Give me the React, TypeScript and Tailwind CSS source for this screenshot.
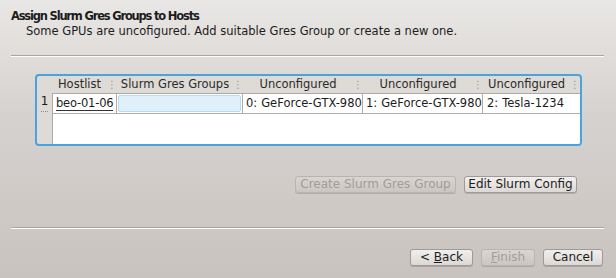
import React from 'react';

const font = { fontFamily: '"DejaVu Sans", Verdana, sans-serif' };

function Sep() {
  return (
    <div className="mx-[11px] w-[593px]">
      <div className="h-px bg-[#aaa5a1]" />
      <div className="h-px bg-white" />
    </div>
  );
}

function Btn({ children, disabled, w }: { children: React.ReactNode; disabled?: boolean; w: string }) {
  return (
    <button
      className={`${w} h-[17px] rounded-[3px] border text-[12px] leading-[15px] whitespace-nowrap shadow-[0_1px_0_rgba(0,0,0,0.15)] ${
        disabled
          ? 'border-[#b9b4b0] bg-gradient-to-b from-[#d9d5d2] to-[#cbc6c2] text-[#a29d99]'
          : 'border-[#9f9a96] bg-gradient-to-b from-[#f1efee] to-[#dcd8d5] text-[#1c1c1c]'
      }`}
    >
      {children}
    </button>
  );
}

const cols = [
  { name: 'Hostlist', w: 'w-[65px]' },
  { name: 'Slurm Gres Groups', w: 'w-[126px]' },
  { name: 'Unconfigured', w: 'w-[120px]' },
  { name: 'Unconfigured', w: 'w-[120px]' },
  { name: 'Unconfigured', w: 'w-[97px]' },
];

function Grip() {
  return <span className="text-[#9a9591] text-[10px] leading-none">⋮</span>;
}

export default function App() {
  return (
    <div
      style={font}
      className="w-[616px] h-[278px] overflow-hidden bg-gradient-to-b from-[#e9e7e5] via-[#d6d2cf] via-40% to-[#c8c3bf] text-[#1c1c1c] flex flex-col"
    >
      <div className="pl-[11px] pt-[9px]">
        <div className="text-[11.5px] font-bold leading-[15px] tracking-[-1.2px]">
          Assign Slurm Gres Groups to Hosts
        </div>
        <div className="pl-[15px] text-[11.5px] leading-[15px]">
          Some GPUs are uncofigured. Add suitable Gres Group or create a new one.
        </div>
      </div>
      <div className="mt-[16px]">
        <Sep />
      </div>

      <div className="ml-[35px] mt-[17px] w-[547px] h-[72px] rounded-[4px] border-2 border-[#4aa3df] bg-[#dedad6] overflow-hidden flex flex-col">
        <div className="flex h-[17px] text-[11.5px] leading-[17px] text-[#2a2a2a] whitespace-nowrap">
          <div className="w-[15px]" />
          {cols.map((c, i) => (
            <div key={i} className={`${c.w} flex items-center justify-between`}>
              <span className="flex-1 text-center">{c.name}</span>
              <Grip />
            </div>
          ))}
        </div>
        <div className="flex flex-1">
          <div className="w-[15px] flex flex-col items-center text-[12px] leading-[16px]">
            <span>1</span>
            <div className="mt-[2px] w-[7px] border-t border-dotted border-[#8f8a86]" />
          </div>
          <div className="flex-1 bg-white border-l border-t border-[#aca8a4]">
            <div className="flex h-[20px] border-b border-[#b0aca8] text-[11.5px] whitespace-nowrap">
              <div className="w-[64px] overflow-hidden border-r border-[#b0aca8] flex items-center px-[3px]">
                <span className="border-b border-[#333] leading-[14px] tracking-[-0.2px]">beo-01-06</span>
              </div>
              <div className="w-[126px] border-r border-[#b0aca8] p-[1px]">
                <div className="h-full rounded-[2px] bg-[#dff0fb] border border-[#b8dcf3]" />
              </div>
              <div className="w-[120px] overflow-hidden border-r border-[#b0aca8] flex items-center px-[3px]">
                0:<span className="ml-[4px]">GeForce-GTX-980</span>
              </div>
              <div className="w-[120px] overflow-hidden border-r border-[#b0aca8] flex items-center px-[3px]">
                1:<span className="ml-[4px]">GeForce-GTX-980</span>
              </div>
              <div className="flex-1 overflow-hidden flex items-center px-[4px]">
                2:<span className="ml-[4px]">Tesla-1234</span>
              </div>
            </div>
          </div>
        </div>
      </div>

      <div className="flex justify-end gap-[8px] mt-[30px] pr-[39px]">
        <Btn disabled w="w-[161px]">Create Slurm Gres Group</Btn>
        <Btn w="w-[113px]">Edit Slurm Config</Btn>
      </div>

      <div className="mt-[34px]">
        <Sep />
      </div>

      <div className="flex justify-end gap-[8px] mt-[20px] pr-[13px]">
        <Btn w="w-[63px]">
          &lt; <span className="underline">B</span>ack
        </Btn>
        <Btn disabled w="w-[54px]">
          <span className="underline">F</span>inish
        </Btn>
        <Btn w="w-[60px]">Cancel</Btn>
      </div>
    </div>
  );
}
